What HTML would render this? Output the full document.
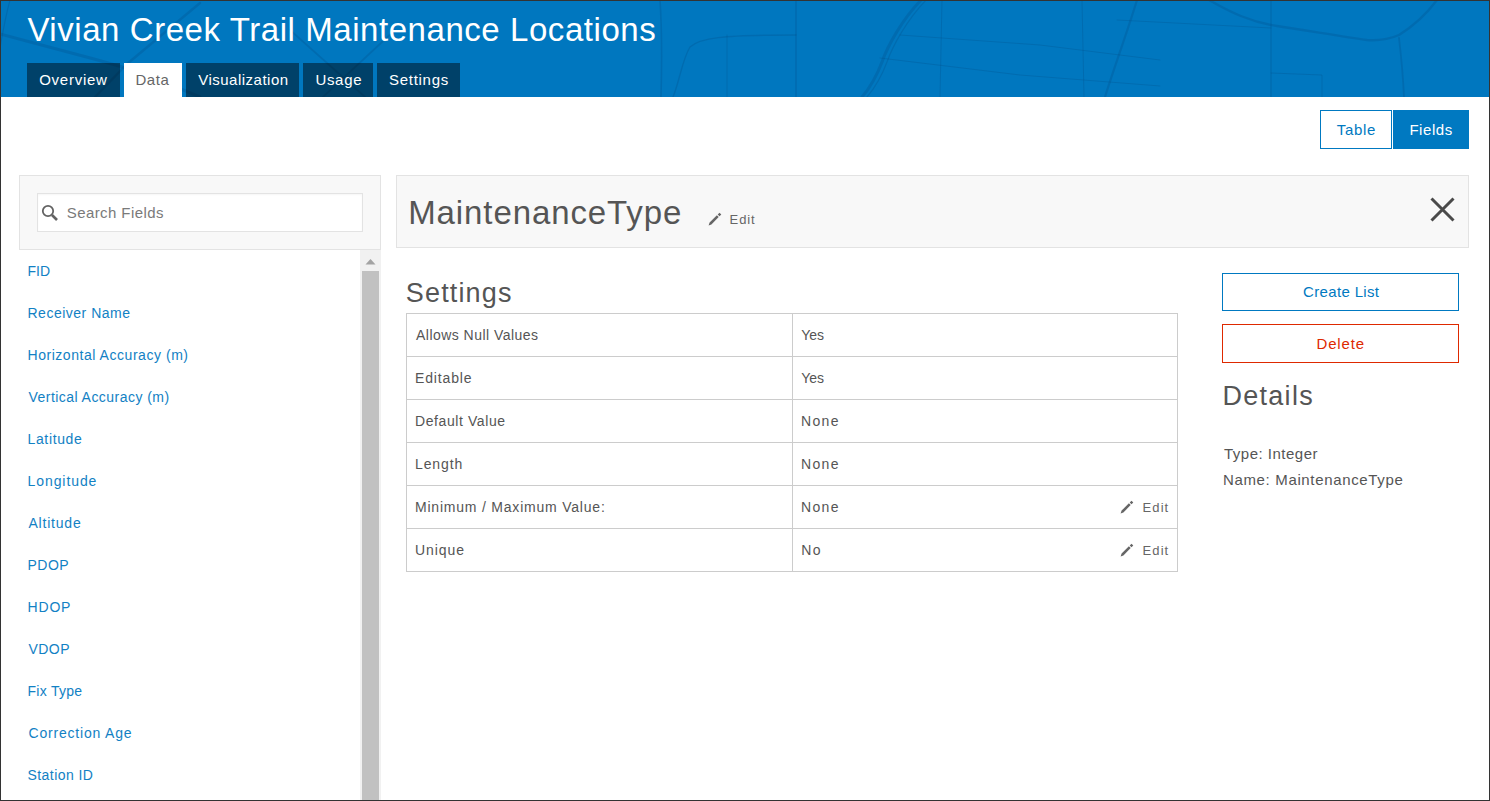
<!DOCTYPE html>
<html><head><meta charset="utf-8"><style>
html,body{margin:0;padding:0;width:1490px;height:801px;overflow:hidden;background:#fff;position:relative;font-family:'Liberation Sans', sans-serif}
.r{position:absolute;display:block}
.t{position:absolute;white-space:nowrap;font-family:'Liberation Sans', sans-serif}
#frame{position:absolute;left:0;top:0;width:1490px;height:801px;box-sizing:border-box;border:1px solid #333;z-index:10}
</style></head><body>
<div class="r" style="left:0px;top:0px;width:1490px;height:97px;background:#0077bf"></div><svg class="r" style="left:0;top:0" width="1490" height="97" viewBox="0 0 1490 97">
<g fill="none" stroke="#00508a" stroke-opacity="0.28" stroke-linecap="round">
<path d="M1209 0 C1230 12 1250 22 1277 26 C1310 31 1345 37 1367 40 C1380 41 1392 38 1399 35 C1415 25 1428 12 1437 0" stroke-width="2.4"/>
<path d="M1399 38 C1401 55 1403 75 1404 97" stroke-width="1.8"/>
<path d="M1137 0 C1128 30 1115 65 1105 97" stroke-width="2.2"/>
<path d="M921 0 C902 20 888 45 882 62 C876 78 868 90 862 97" stroke-width="3"/>
<path d="M926 0 C907 20 893 45 887 62 C881 78 873 90 867 97" stroke-width="1.2"/>
<path d="M796 0 L796 97" stroke-width="1.6"/>
<path d="M1271 0 L1271 97" stroke-width="1.4"/>
<path d="M942 0 L940 97" stroke-width="1"/>
<path d="M1082 0 L1084 97" stroke-width="1"/>
<path d="M880 58 L1020 75 L1160 86" stroke-width="1"/>
<path d="M900 35 L1040 45 L1160 60" stroke-width="1"/>
<path d="M1117 20 L1271 28" stroke-width="1"/>
<path d="M1271 73 L1322 75 L1322 97" stroke-width="1"/>
<path d="M660 0 C662 30 662 60 661 97" stroke-width="1.6"/>
<path d="M673 97 C680 80 682 60 690 47 C700 38 720 35 796 35" stroke-width="1.4"/>
<path d="M727 35 L727 97" stroke-width="1"/>
<path d="M0 34 L94 59 L140 72 L200 97" stroke-width="3"/>
<path d="M200 3 L127 64 L95 97" stroke-width="2.5"/>
<path d="M10 0 C6 15 3 30 0 48" stroke-width="1.2"/>
<path d="M290 30 L365 97" stroke-width="1.8"/>
<path d="M395 30 L323 97" stroke-width="1.8"/>
</g>
</svg>
<div class="r" style="left:27px;top:63px;width:93px;height:34px;background:rgba(0,0,0,0.45)"></div><div class="r" style="left:186px;top:63px;width:113px;height:34px;background:rgba(0,0,0,0.45)"></div><div class="r" style="left:303px;top:63px;width:70px;height:34px;background:rgba(0,0,0,0.45)"></div><div class="r" style="left:377px;top:63px;width:83px;height:34px;background:rgba(0,0,0,0.45)"></div><div class="r" style="left:124px;top:63px;width:58px;height:34px;background:#fff"></div><div class="r" style="left:1320px;top:110px;width:72px;height:39px;border:1px solid #0079c1;box-sizing:border-box;background:#fff"></div><div class="r" style="left:1393px;top:110px;width:76px;height:39px;background:#0079c1"></div><div class="r" style="left:19px;top:175px;width:362px;height:75px;background:#f8f8f8;border:1px solid #e3e3e3;box-sizing:border-box"></div><div class="r" style="left:37px;top:193px;width:326px;height:39px;background:#fff;border:1px solid #e3e3e3;box-sizing:border-box;box-shadow:inset 0 1px 2px rgba(0,0,0,0.04)"></div><div class="r" style="left:360px;top:250px;width:21px;height:551px;background:#f1f1f1"></div><div class="r" style="left:362px;top:271px;width:17px;height:530px;background:#c1c1c1"></div><svg class="r" style="left:360px;top:255px" width="21" height="14"><path d="M5.5 9.5 L10.5 4 L15.5 9.5 Z" fill="#a3a3a3"/></svg><div class="r" style="left:396px;top:175px;width:1073px;height:73px;background:#f8f8f8;border:1px solid #e3e3e3;box-sizing:border-box"></div><div class="r" style="left:406px;top:313px;width:772px;height:259px;border:1px solid #cccccc;box-sizing:border-box"></div><div class="r" style="left:406px;top:356px;width:772px;height:1px;background:#cccccc"></div><div class="r" style="left:406px;top:399px;width:772px;height:1px;background:#cccccc"></div><div class="r" style="left:406px;top:442px;width:772px;height:1px;background:#cccccc"></div><div class="r" style="left:406px;top:485px;width:772px;height:1px;background:#cccccc"></div><div class="r" style="left:406px;top:528px;width:772px;height:1px;background:#cccccc"></div><div class="r" style="left:792px;top:313px;width:1px;height:259px;background:#cccccc"></div><div class="r" style="left:1222px;top:273px;width:237px;height:38px;border:1px solid #0079c1;box-sizing:border-box"></div><div class="r" style="left:1222px;top:324px;width:237px;height:39px;border:1px solid #de2900;box-sizing:border-box"></div><svg class="r" style="left:40px;top:203px" width="20" height="20"><circle cx="8" cy="8" r="5.2" fill="none" stroke="#636363" stroke-width="1.8"/><path d="M12 12 L17 17" stroke="#636363" stroke-width="2.6"/></svg><svg class="r" style="left:708px;top:212px" width="14" height="14"><path d="M1.6 10.6 L8.9 3.3 L10.7 5.1 L3.4 12.4 Z M1.6 10.6 L3.4 12.4 L0.6 13.4 Z M9.7 2.5 L11.5 0.7 L13.3 2.5 L11.5 4.3 Z" fill="#666666"/></svg><svg class="r" style="left:1120px;top:500px" width="14" height="14"><path d="M1.6 10.6 L8.9 3.3 L10.7 5.1 L3.4 12.4 Z M1.6 10.6 L3.4 12.4 L0.6 13.4 Z M9.7 2.5 L11.5 0.7 L13.3 2.5 L11.5 4.3 Z" fill="#666666"/></svg><svg class="r" style="left:1120px;top:543px" width="14" height="14"><path d="M1.6 10.6 L8.9 3.3 L10.7 5.1 L3.4 12.4 Z M1.6 10.6 L3.4 12.4 L0.6 13.4 Z M9.7 2.5 L11.5 0.7 L13.3 2.5 L11.5 4.3 Z" fill="#666666"/></svg><svg class="r" style="left:1428px;top:195px" width="29" height="29"><path d="M3.5 3.5 L25.5 25.5 M25.5 3.5 L3.5 25.5" stroke="#4a4a4a" stroke-width="3"/></svg>
<div class="t" style="left:27.40px;top:5.00px;font-size:33px;line-height:49.5px;letter-spacing:0.559px;color:#fff">Vivian Creek Trail Maintenance Locations</div><div class="t" style="left:39.20px;top:69.00px;font-size:15px;line-height:22.5px;letter-spacing:0.742px;color:#fff">Overview</div><div class="t" style="left:135.50px;top:69.00px;font-size:15px;line-height:22.5px;letter-spacing:0.534px;color:#666666">Data</div><div class="t" style="left:198.20px;top:69.00px;font-size:15px;line-height:22.5px;letter-spacing:0.5px;color:#fff">Visualization</div><div class="t" style="left:315.40px;top:69.00px;font-size:15px;line-height:22.5px;letter-spacing:0.7px;color:#fff">Usage</div><div class="t" style="left:389.00px;top:69.00px;font-size:15px;line-height:22.5px;letter-spacing:0.714px;color:#fff">Settings</div><div class="t" style="left:1336.80px;top:119.00px;font-size:15px;line-height:22.5px;letter-spacing:0.65px;color:#0079c1">Table</div><div class="t" style="left:1409.40px;top:119.00px;font-size:15px;line-height:22.5px;letter-spacing:0.56px;color:#fff">Fields</div><div class="t" style="left:66.80px;top:202.00px;font-size:15px;line-height:22.5px;letter-spacing:0.408px;color:#7a7a7a">Search Fields</div><div class="t" style="left:27.50px;top:261.00px;font-size:14px;line-height:21.0px;letter-spacing:0.05px;color:#1281c4">FID</div><div class="t" style="left:27.50px;top:303.00px;font-size:14px;line-height:21.0px;letter-spacing:0.5px;color:#1281c4">Receiver Name</div><div class="t" style="left:27.50px;top:345.00px;font-size:14px;line-height:21.0px;letter-spacing:0.541px;color:#1281c4">Horizontal Accuracy (m)</div><div class="t" style="left:28.50px;top:387.00px;font-size:14px;line-height:21.0px;letter-spacing:0.455px;color:#1281c4">Vertical Accuracy (m)</div><div class="t" style="left:27.50px;top:429.00px;font-size:14px;line-height:21.0px;letter-spacing:0.643px;color:#1281c4">Latitude</div><div class="t" style="left:27.50px;top:471.00px;font-size:14px;line-height:21.0px;letter-spacing:0.925px;color:#1281c4">Longitude</div><div class="t" style="left:28.50px;top:513.00px;font-size:14px;line-height:21.0px;letter-spacing:0.786px;color:#1281c4">Altitude</div><div class="t" style="left:27.50px;top:555.00px;font-size:14px;line-height:21.0px;letter-spacing:0.5px;color:#1281c4">PDOP</div><div class="t" style="left:27.50px;top:597.00px;font-size:14px;line-height:21.0px;letter-spacing:0.833px;color:#1281c4">HDOP</div><div class="t" style="left:28.50px;top:639.00px;font-size:14px;line-height:21.0px;letter-spacing:0.433px;color:#1281c4">VDOP</div><div class="t" style="left:27.50px;top:681.00px;font-size:14px;line-height:21.0px;letter-spacing:0.286px;color:#1281c4">Fix Type</div><div class="t" style="left:28.50px;top:723.00px;font-size:14px;line-height:21.0px;letter-spacing:0.808px;color:#1281c4">Correction Age</div><div class="t" style="left:27.50px;top:765.00px;font-size:14px;line-height:21.0px;letter-spacing:0.444px;color:#1281c4">Station ID</div><div class="t" style="left:408.20px;top:188.00px;font-size:33px;line-height:49.5px;letter-spacing:0.907px;color:#555555">MaintenanceType</div><div class="t" style="left:729.60px;top:210.20px;font-size:13px;line-height:19.5px;letter-spacing:0.867px;color:#666666">Edit</div><div class="t" style="left:405.80px;top:273.00px;font-size:27px;line-height:40.5px;letter-spacing:1.157px;color:#555555">Settings</div><div class="t" style="left:416.00px;top:325.00px;font-size:14px;line-height:21.0px;letter-spacing:0.465px;color:#555555">Allows Null Values</div><div class="t" style="left:415.00px;top:368.00px;font-size:14px;line-height:21.0px;letter-spacing:0.857px;color:#555555">Editable</div><div class="t" style="left:415.00px;top:411.00px;font-size:14px;line-height:21.0px;letter-spacing:0.591px;color:#555555">Default Value</div><div class="t" style="left:415.00px;top:454.00px;font-size:14px;line-height:21.0px;letter-spacing:0.88px;color:#555555">Length</div><div class="t" style="left:415.00px;top:497.00px;font-size:14px;line-height:21.0px;letter-spacing:0.787px;color:#555555">Minimum / Maximum Value:</div><div class="t" style="left:415.00px;top:540.00px;font-size:14px;line-height:21.0px;letter-spacing:0.92px;color:#555555">Unique</div><div class="t" style="left:801.20px;top:325.00px;font-size:14px;line-height:21.0px;letter-spacing:0.0px;color:#555555">Yes</div><div class="t" style="left:801.20px;top:368.00px;font-size:14px;line-height:21.0px;letter-spacing:0.0px;color:#555555">Yes</div><div class="t" style="left:801.00px;top:411.00px;font-size:14px;line-height:21.0px;letter-spacing:1.333px;color:#555555">None</div><div class="t" style="left:801.00px;top:454.00px;font-size:14px;line-height:21.0px;letter-spacing:1.333px;color:#555555">None</div><div class="t" style="left:801.00px;top:497.00px;font-size:14px;line-height:21.0px;letter-spacing:1.333px;color:#555555">None</div><div class="t" style="left:801.30px;top:540.00px;font-size:14px;line-height:21.0px;letter-spacing:1.4px;color:#555555">No</div><div class="t" style="left:1142.60px;top:498.00px;font-size:13px;line-height:19.5px;letter-spacing:1.066px;color:#666666">Edit</div><div class="t" style="left:1142.60px;top:541.00px;font-size:13px;line-height:19.5px;letter-spacing:1.066px;color:#666666">Edit</div><div class="t" style="left:1303.10px;top:281.00px;font-size:15px;line-height:22.5px;letter-spacing:0.34px;color:#0079c1">Create List</div><div class="t" style="left:1316.50px;top:333.00px;font-size:15px;line-height:22.5px;letter-spacing:0.84px;color:#de2900">Delete</div><div class="t" style="left:1222.40px;top:376.00px;font-size:27px;line-height:40.5px;letter-spacing:1.3px;color:#555555">Details</div><div class="t" style="left:1224.00px;top:443.00px;font-size:15px;line-height:22.5px;letter-spacing:0.5px;color:#555555">Type: Integer</div><div class="t" style="left:1223.00px;top:469.00px;font-size:15px;line-height:22.5px;letter-spacing:0.65px;color:#555555">Name: MaintenanceType</div>
<div id="frame"></div>
</body></html>
